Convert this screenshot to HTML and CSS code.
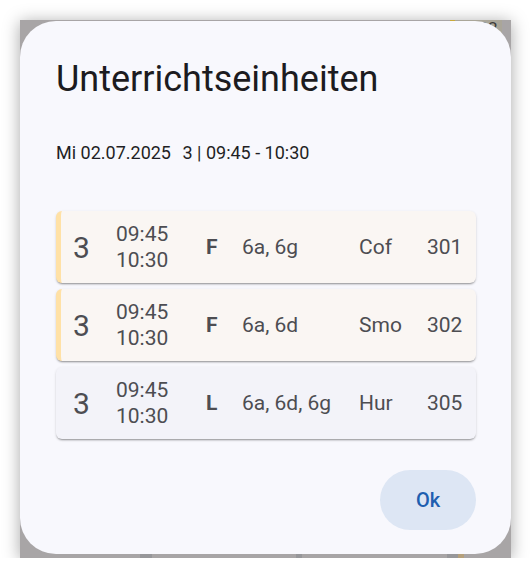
FILE: index.html
```html
<!DOCTYPE html>
<html>

<head>
    <meta charset="UTF-8">
    <title>Unterrichtseinheiten</title>
    <link rel="stylesheet" href="styles.css">
</head>

<body>
    <div id="bildschirm">
        <div id="stundenplan">
            <div class="plan-oben">
                <div class="plan-zelle">302</div>
            </div>
            <div class="plan-unten">
                <span class="linie linie-1"></span>
                <span class="linie linie-2"></span>
                <span class="linie linie-3"></span>
                <span class="linie-gelb"></span>
            </div>
        </div>

        <div id="dialog">
            <h1 id="titulo">Unterrichtseinheiten</h1>
            <div id="untertitel">
                <span>Mi 02.07.2025</span>
                <span class="stunde">3 | 09:45 - 10:30</span>
            </div>

            <ul id="einheiten">
                <li class="einheit markiert">
                    <span class="nr">3</span>
                    <span class="zeit">09:45<br>10:30</span>
                    <span class="fach">F</span>
                    <span class="klassen">6a, 6g</span>
                    <span class="lehrer">Cof</span>
                    <span class="raum">301</span>
                </li>
                <li class="einheit markiert">
                    <span class="nr">3</span>
                    <span class="zeit">09:45<br>10:30</span>
                    <span class="fach">F</span>
                    <span class="klassen">6a, 6d</span>
                    <span class="lehrer">Smo</span>
                    <span class="raum">302</span>
                </li>
                <li class="einheit">
                    <span class="nr">3</span>
                    <span class="zeit">09:45<br>10:30</span>
                    <span class="fach">L</span>
                    <span class="klassen">6a, 6d, 6g</span>
                    <span class="lehrer">Hur</span>
                    <span class="raum">305</span>
                </li>
            </ul>

            <div id="aktionen">
                <a href="#" id="ok">Ok</a>
            </div>
        </div>
    </div>
</body>

</html>
```

FILE: styles.css
```css
* {
    font-family: Roboto, "Noto Sans", sans-serif;
    box-sizing: border-box;
}

body {
    margin: 0;
    background-color: #FFF;
}

#bildschirm {
    position: relative;
    overflow: hidden;
    width: 491px;
    height: 538px;
    margin: 20px 0 0 20px;
    background-color: #a8a5a6;
    box-shadow: 0 2px 16px rgba(0, 0, 0, .35);
}

/* was hinter dem Dialog liegt */
#stundenplan {
    display: flex;
    flex-direction: column;
    height: 100%;
}

.plan-oben {
    display: flex;
    justify-content: flex-end;
    height: 20px;
    padding-right: 9px;
}

.plan-zelle {
    width: 52px;
    height: 30px;
    margin-top: -4px;
    padding-left: 14px;
    border-left: 5px solid #c9a93a;
    background-color: #aaa699;
    color: #3c3b38;
    font-size: 17px;
    line-height: 24px;
}

.plan-unten {
    display: flex;
    height: 5px;
    margin-top: auto;
}

.linie {
    height: 100%;
    background-color: #97979a;
}

.linie-1 {
    width: 12px;
    margin-left: 120px;
}

.linie-2 {
    width: 6px;
    margin-left: 144px;
}

.linie-3 {
    width: 11px;
    margin-left: 145px;
}

.linie-gelb {
    width: 6px;
    background-color: #b5a07c;
}

/* Dialog */
#dialog {
    position: absolute;
    top: 1px;
    left: 0;
    right: 0;
    height: 533px;
    padding: 36px 35px 24px 36px;
    border-radius: 36px;
    background-color: #f8f8fd;
}

#titulo {
    margin: 0;
    color: #1c1b20;
    font-size: 36px;
    font-weight: 400;
    line-height: 44px;
}

#untertitel {
    margin-top: 40px;
    color: #1f1f24;
    font-size: 18px;
    line-height: 24px;
}

#untertitel .stunde {
    margin-left: 7px;
}

ul#einheiten {
    display: flex;
    flex-direction: column;
    gap: 6px;
    list-style: none;
    margin: 46px 0 0 0;
    padding: 0;
}

.einheit {
    display: grid;
    grid-template-columns: 43px 90px 36px 117px 68px auto;
    align-items: center;
    height: 72px;
    padding-left: 17px;
    border-radius: 6px;
    background-color: #f3f3f9;
    color: #4d4d52;
    font-size: 21px;
    box-shadow: 0 2px 2px -1px rgba(0, 0, 0, .35), 0 1px 3px rgba(0, 0, 0, .12);
}

.einheit.markiert {
    padding-left: 12px;
    border-left: 5px solid #ffe1a6;
    background-color: #faf6f3;
}

.nr {
    font-size: 30px;
}

.zeit {
    line-height: 26px;
}

.fach {
    font-weight: 700;
}

#aktionen {
    display: flex;
    justify-content: flex-end;
    margin-top: 31px;
}

#ok {
    display: flex;
    align-items: center;
    justify-content: center;
    width: 96px;
    height: 60px;
    border-radius: 30px;
    background-color: #dde6f4;
    color: #1f5fb0;
    font-size: 20px;
    font-weight: 500;
    text-decoration: none;
}
```
